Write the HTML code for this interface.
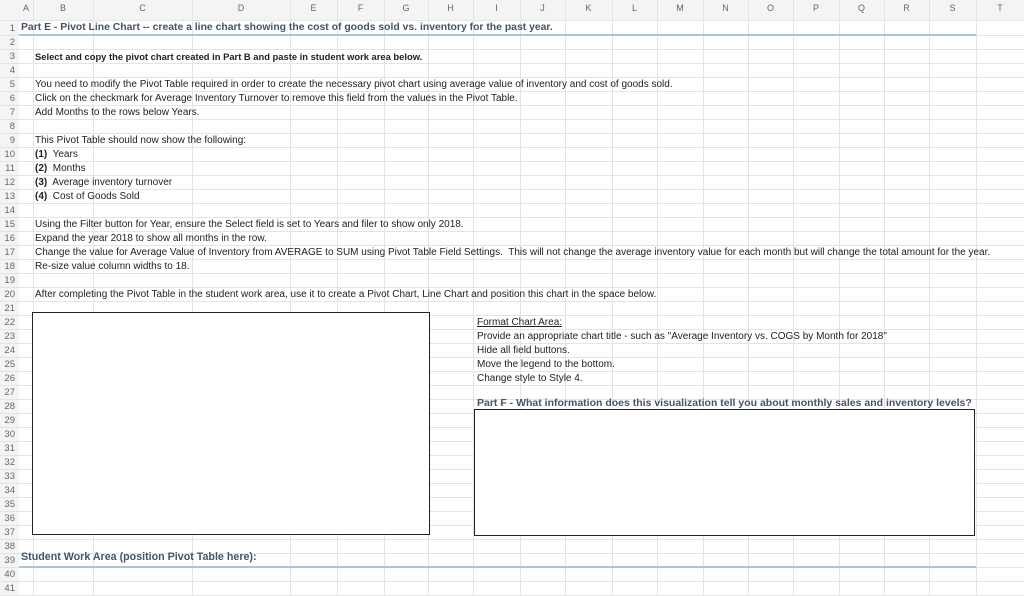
<!DOCTYPE html>
<html><head><meta charset="utf-8"><style>
body{margin:0;width:1024px;height:595px;overflow:hidden;background:#fff;font-family:"Liberation Sans",Arial,sans-serif;position:relative}
.vl{position:absolute;top:0;width:1px;height:595px;background:#e4e4e4}
.hl{position:absolute;left:0;width:1024px;height:1px;background:#e4e4e4}
.ch{position:absolute;top:3px;font-size:9px;color:#666;text-align:center}
.rn{position:absolute;left:0;width:15px;text-align:right;font-size:9.5px;color:#666}
.t{position:absolute;font-size:10px;color:#222;white-space:nowrap;line-height:14px;margin-top:1px}
.bx{position:absolute;border:1.5px solid #222;background:#fff;box-sizing:border-box}
</style></head><body>
<div style="position:absolute;left:0;top:0;width:1024px;height:20px;background:#f4f4f4"></div>
<div style="position:absolute;left:0;top:0;width:19px;height:595px;background:#f4f4f4"></div>
<div id="g"></div>
<script>
var g=document.getElementById('g'),h='';
var xs=[19,33,93,192,290,337,384,428,473,520,565,612,657,703,748,793,839,884,929,976,1024];
var L='ABCDEFGHIJKLMNOPQRST';
for(var i=1;i<xs.length-1;i++)h+='<div class="vl" style="left:'+xs[i]+'px"></div>';
h+='<div class="hl" style="top:20px"></div>';
for(var r=2;r<=42;r++)h+='<div class="hl" style="top:'+(35+(r-2)*14)+'px"></div>';
for(var i=0;i<20;i++)h+='<div class="ch" style="left:'+xs[i]+'px;width:'+(xs[i+1]-xs[i])+'px">'+L[i]+'</div>';
h+='<div class="rn" style="top:23px">1</div>';
for(var r=2;r<=41;r++)h+='<div class="rn" style="top:'+(37+(r-2)*14)+'px">'+r+'</div>';
g.innerHTML=h;
</script>
<div style="position:absolute;left:19px;top:34px;width:957px;height:2px;background:#aec3d3"></div>
<div style="position:absolute;left:19px;top:566px;width:957px;height:2px;background:#aec3d3"></div>
<div class="t" style="left:21px;top:20px;font-size:10.4px;font-weight:bold;color:#44546a">Part E - Pivot Line Chart -- create a line chart showing the cost of goods sold vs. inventory for the past year.</div>
<div class="t" style="left:35px;top:49px;font-size:9.4px;font-weight:bold">Select and copy the pivot chart created in Part B and paste in student work area below.</div>
<div class="t" style="left:35px;top:77px">You need to modify the Pivot Table required in order to create the necessary pivot chart using average value of inventory and cost of goods sold.</div>
<div class="t" style="left:35px;top:91px">Click on the checkmark for Average Inventory Turnover to remove this field from the values in the Pivot Table.</div>
<div class="t" style="left:35px;top:105px">Add Months to the rows below Years.</div>
<div class="t" style="left:35px;top:133px">This Pivot Table should now show the following:</div>
<div class="t" style="left:35px;top:147px"><b>(1)</b>&nbsp; Years</div>
<div class="t" style="left:35px;top:161px"><b>(2)</b>&nbsp; Months</div>
<div class="t" style="left:35px;top:175px"><b>(3)</b>&nbsp; Average inventory turnover</div>
<div class="t" style="left:35px;top:189px"><b>(4)</b>&nbsp; Cost of Goods Sold</div>
<div class="t" style="left:35px;top:217px">Using the Filter button for Year, ensure the Select field is set to Years and filer to show only 2018.</div>
<div class="t" style="left:35px;top:231px">Expand the year 2018 to show all months in the row.</div>
<div class="t" style="left:35px;top:245px">Change the value for Average Value of Inventory from AVERAGE to SUM using Pivot Table Field Settings.&nbsp; This will not change the average inventory value for each month but will change the total amount for the year.</div>
<div class="t" style="left:35px;top:259px">Re-size value column widths to 18.</div>
<div class="t" style="left:35px;top:287px">After completing the Pivot Table in the student work area, use it to create a Pivot Chart, Line Chart and position this chart in the space below.</div>
<div class="bx" style="left:32px;top:312px;width:398px;height:223px"></div>
<div class="t" style="left:477px;top:315px;text-decoration:underline">Format Chart Area:</div>
<div class="t" style="left:477px;top:329px">Provide an appropriate chart title - such as "Average Inventory vs. COGS by Month for 2018"</div>
<div class="t" style="left:477px;top:343px">Hide all field buttons.</div>
<div class="t" style="left:477px;top:357px">Move the legend to the bottom.</div>
<div class="t" style="left:477px;top:371px">Change style to Style 4.</div>
<div class="t" style="left:477px;top:395px;font-size:10.5px;font-weight:bold;color:#44546a">Part F - What information does this visualization tell you about monthly sales and inventory levels?</div>
<div class="bx" style="left:474px;top:409px;width:501px;height:127px"></div>
<div class="t" style="left:21px;top:549px;font-size:10.7px;font-weight:bold;color:#44546a">Student Work Area (position Pivot Table here):</div>
</body></html>
